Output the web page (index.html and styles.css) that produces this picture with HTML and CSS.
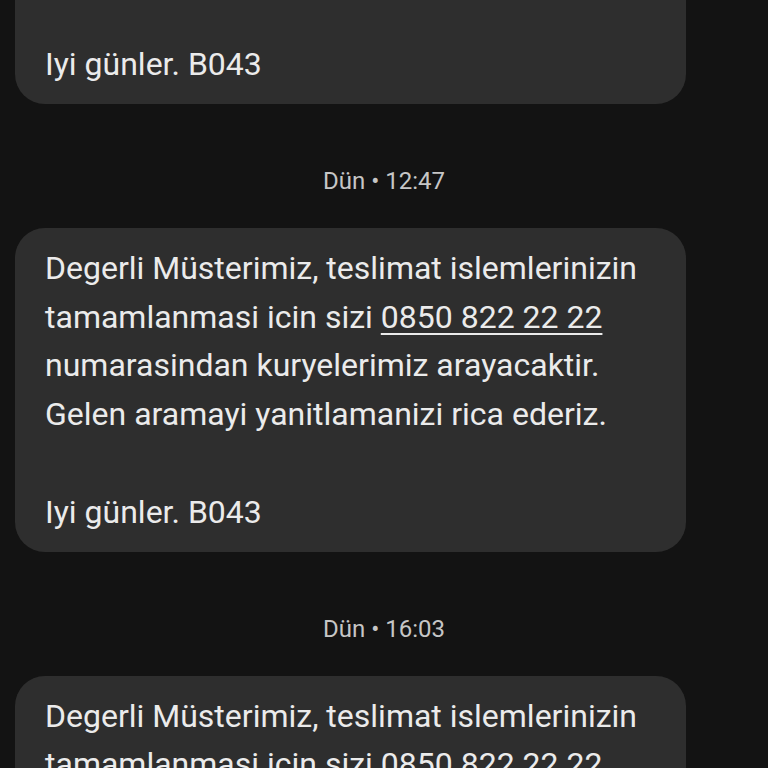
FILE: index.html
```html
<!DOCTYPE html>
<html lang="tr">
<head>
<meta charset="utf-8">
<link rel="stylesheet" href="styles.css">
</head>
<body>
<div class="thread">
  <div class="bubble">
    <p>Degerli Müsterimiz, teslimat islemlerinizin tamamlanmasi icin sizi <span class="link">0850 822 22 22</span> numarasindan kuryelerimiz arayacaktir. Gelen aramayi yanitlamanizi rica ederiz.</p>
    <p class="gap">Iyi günler. B043</p>
  </div>
  <div class="stamp">Dün • 12:47</div>
  <div class="bubble">
    <p>Degerli Müsterimiz, teslimat islemlerinizin tamamlanmasi icin sizi <span class="link">0850 822 22 22</span> numarasindan kuryelerimiz arayacaktir. Gelen aramayi yanitlamanizi rica ederiz.</p>
    <p class="gap">Iyi günler. B043</p>
  </div>
  <div class="stamp">Dün • 16:03</div>
  <div class="bubble">
    <p>Degerli Müsterimiz, teslimat islemlerinizin tamamlanmasi icin sizi <span class="link">0850 822 22 22</span> numarasindan kuryelerimiz arayacaktir. Gelen aramayi yanitlamanizi rica ederiz.</p>
    <p class="gap">Iyi günler. B043</p>
  </div>
</div>
</body>
</html>
```
FILE: styles.css
```css
html, body {
  margin: 0;
  padding: 0;
  background: #131313;
  overflow: hidden;
  height: 768px;
}
.thread {
  display: flex;
  flex-direction: column;
  margin-top: -220px;
}
.bubble {
  margin: 0 82px 0 15px;
  background: #2e2e2e;
  border-radius: 30px;
  padding: 16px 20px 15px 30px;
  color: #ebebeb;
  font-family: Roboto, "Noto Sans", sans-serif;
  font-size: 32px;
  line-height: 48.8px;
}
.bubble p {
  margin: 0;
}
.bubble .gap {
  margin-top: 48.8px;
}
.link {
  text-decoration: underline;
  text-decoration-thickness: 2px;
  text-underline-offset: 5px;
}
.stamp {
  margin: 63px 0 33px 0;
  text-align: center;
  color: #c6c6c6;
  font-family: Roboto, "Noto Sans", sans-serif;
  font-size: 24px;
  line-height: 28px;
}
```
